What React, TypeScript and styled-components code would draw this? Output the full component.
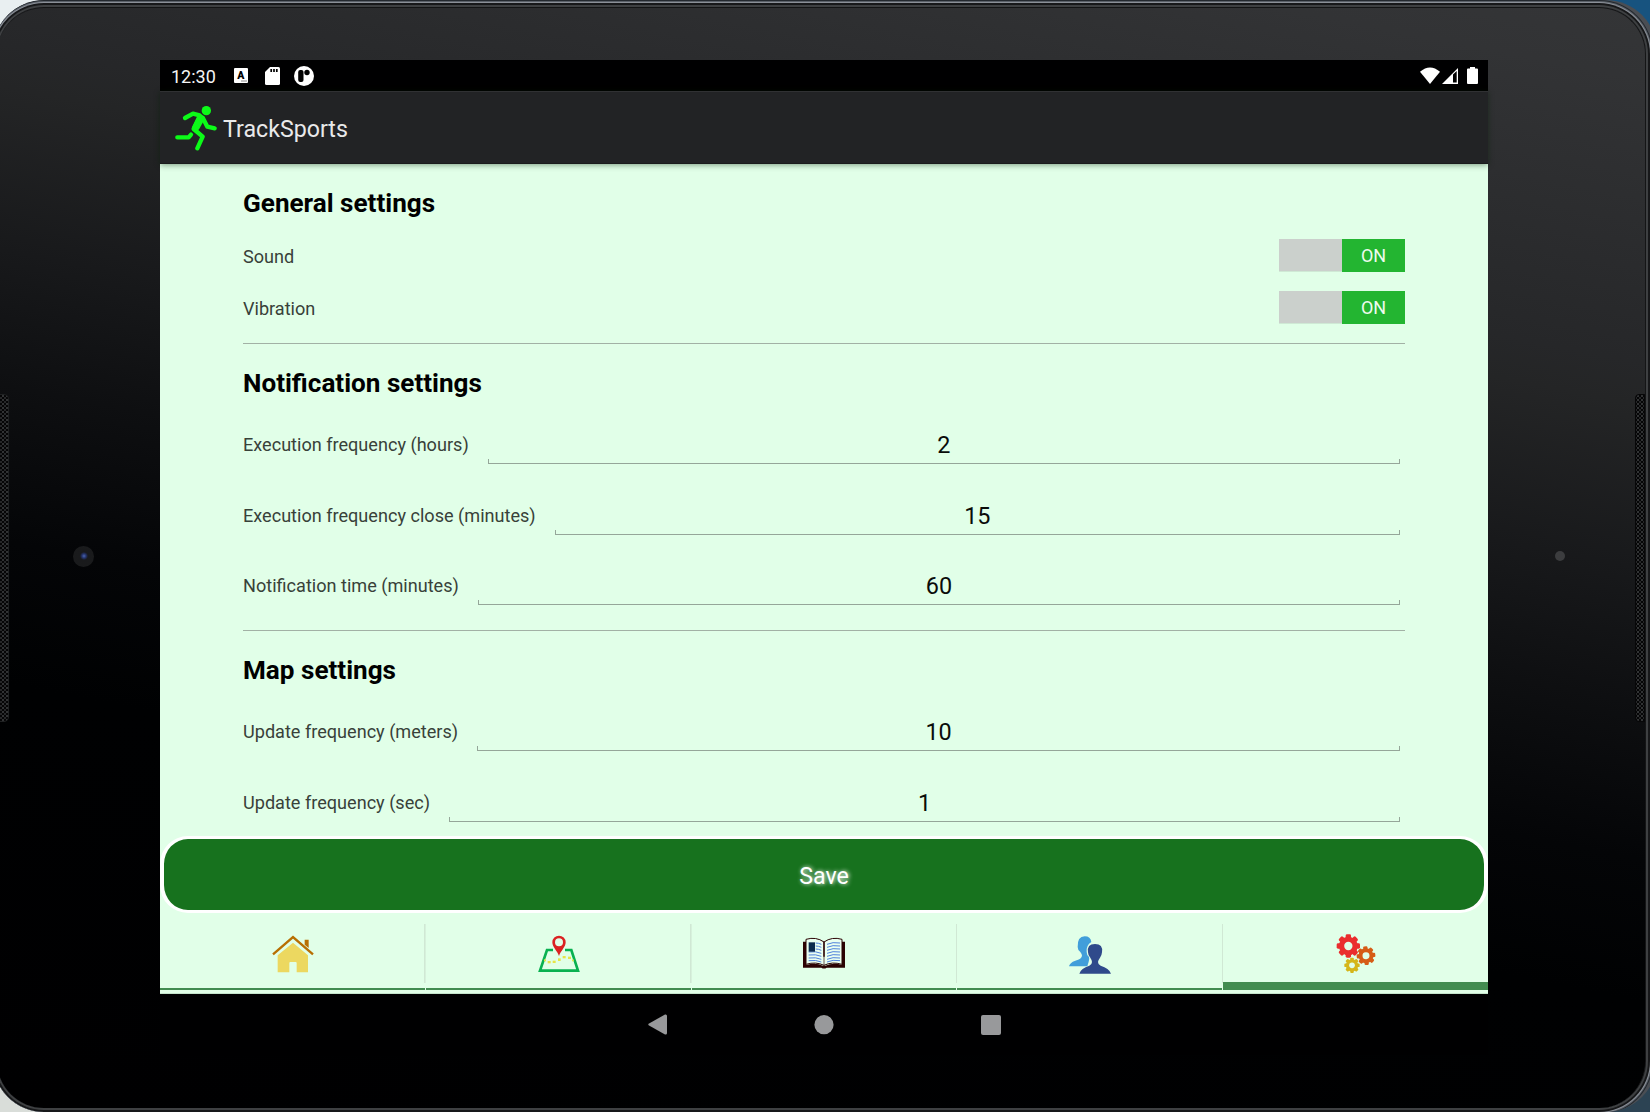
import React from "react";
import styled, { createGlobalStyle } from "styled-components";

const GlobalStyle = createGlobalStyle`
  *, *::before, *::after { box-sizing: border-box; }
  html, body { margin: 0; padding: 0; overflow: hidden; }
  body { font-family: Roboto, "Liberation Sans", sans-serif; }
`;

const Desk = styled.div`
  width: 1650px;
  height: 1112px;
  overflow: hidden;
  background:
    linear-gradient(#e9eff1, #e9eff1) 0 0 / 50% 50% no-repeat,
    linear-gradient(#17537f, #17537f) 100% 0 / 50% 50% no-repeat,
    linear-gradient(#d9ddd9, #d9ddd9) 0 100% / 50% 50% no-repeat,
    linear-gradient(#2c4353, #2c4353) 100% 100% / 50% 50% no-repeat;
`;

const Casing = styled.div`
  width: 1664px;
  height: 1112px;
  margin-left: -7px;
  padding: 7px 11px 4px 4px;
  border-radius: 51px;
  background: #4a4e54;
  overflow: hidden;
`;

const Face = styled.div`
  position: relative;
  height: 1101px;
  padding: 52px 0 0 163px;
  border-radius: 47px;
  border: solid #141516;
  border-width: 1px 1px 0 0;
  box-shadow: 0 0 0 2px #3e4042, 0 0 0 4px #17181a, 0 0 0 5px #8b9098, 0 0 0 6px #5a6068, 0 0 0 7px #23282e;
  background: linear-gradient(
    191deg,
    #343537 0%,
    #323335 5%,
    #262729 25%,
    #242526 28%,
    #18191b 39.5%,
    #0e0f11 49%,
    #040507 60%,
    #000102 70%,
    #000001 100%
  );
`;

const Speaker = styled.div<{ $side: "left" | "right" }>`
  position: absolute;
  top: 386px;
  ${(p) => (p.$side === "left" ? "left: -1px;" : "right: 0;")}
  width: ${(p) => (p.$side === "left" ? 13 : 10)}px;
  height: 328px;
  border: 1px solid ${(p) => (p.$side === "left" ? "#1f2122" : "#070708")};
  border-radius: ${(p) => (p.$side === "left" ? "0 5px 5px 0" : "4px 0 0 4px")};
  background:
    radial-gradient(circle at 1px 1px, #3e4042 0.6px, transparent 1.1px) 1px 0 / 4px 4px,
    radial-gradient(circle at 1px 1px, #303133 0.6px, transparent 1.1px) 3px 2px / 4px 4px,
    #050506;
`;

const Camera = styled.div`
  position: absolute;
  left: 76px;
  top: 538px;
  width: 21px;
  height: 21px;
  border-radius: 50%;
  background: radial-gradient(circle at 11px 10px, #4d66ac 0, #25356f 2px, #191a1c 4px, #1a1b1c 100%);
`;

const Sensor = styled.div`
  position: absolute;
  left: 1558px;
  top: 543px;
  width: 10px;
  height: 10px;
  border-radius: 50%;
  background: #3c3d3f;
`;

const Screen = styled.div`
  width: 1328px;
  height: 995px;
  display: flex;
  flex-direction: column;
  background: #e1ffe8;
`;

const StatusBar = styled.div`
  flex: none;
  height: 31px;
  padding: 0 10px 0 11px;
  display: flex;
  align-items: center;
  justify-content: space-between;
  background: #000001;
`;

const StatusGroup = styled.div`
  display: flex;
  align-items: center;
`;

const Clock = styled.span`
  width: 63px;
  color: #f4f4f4;
  font-size: 18px;
  line-height: 31px;
  padding-top: 2px;
`;

const AppBar = styled.header`
  position: relative;
  flex: none;
  height: 73px;
  padding-left: 15px;
  display: flex;
  align-items: center;
  background: #222325;
  border-top: 1px solid #303133;
  border-bottom: 1px solid #1a1b1c;
  box-shadow: 0 1px 6px rgba(0, 30, 0, 0.45);
`;

const AppTitle = styled.h1`
  margin: 3px 0 0 5px;
  color: #e9e9ea;
  font-size: 23.2px;
  font-weight: 400;
  line-height: 30px;
`;

const Settings = styled.main`
  flex: none;
  height: 672px;
  padding: 0 83px;
`;

const Section = styled.section`
  & + & {
    border-top: 1px solid #a2b1a5;
  }
`;

const SectionTitle = styled.h2`
  margin: 0;
  padding-top: 14px;
  height: 65px;
  color: #000;
  font-size: 26.1px;
  font-weight: 700;
  line-height: 50px;
`;

const ToggleRow = styled.div`
  height: 52px;
  display: flex;
  align-items: center;
  justify-content: space-between;
`;

const ToggleGroup = styled.div`
  padding-bottom: 10px;
`;

const Label = styled.span`
  flex: none;
  color: #384139;
  font-size: 18.1px;
  line-height: 24px;
`;

const ToggleLabel = styled(Label)`
  padding-top: 3px;
`;

const Switch = styled.button`
  width: 126px;
  height: 32px;
  padding: 0;
  border: 0;
  display: grid;
  grid-template-columns: 1fr 1fr;
  background: #cbd0cc;
  font-family: inherit;
  box-shadow: 0 1px 0 #cfe9d5;
`;

const SwitchThumb = styled.span`
  grid-column: 2;
  padding-top: 1px;
  background: #23b531;
  color: #eefbef;
  font-size: 18px;
  line-height: 32px;
  text-align: center;
`;

const FieldGroup = styled.div`
  padding-bottom: 9px;
`;

const FieldRow = styled.div`
  height: 70.7px;
  padding-right: 5px;
  display: flex;
  gap: 19px;
`;

const FieldLabel = styled(Label)`
  line-height: 72px;
`;

const Field = styled.div`
  flex: 1;
  height: 55px;
  padding-top: 19px;
  color: #0a0c0a;
  font-size: 23.4px;
  line-height: 34px;
  text-align: center;
  background:
    linear-gradient(#95a699, #95a699) 0 100% / 100% 1px no-repeat,
    linear-gradient(#95a699, #95a699) 0 100% / 1px 5px no-repeat,
    linear-gradient(#95a699, #95a699) 100% 100% / 1px 5px no-repeat;
`;

const SaveButton = styled.button`
  flex: none;
  width: 100%;
  height: 77px;
  padding: 2px 0 0;
  border: solid #fff;
  border-width: 3.5px 4px;
  border-radius: 28px;
  background: #17721e;
  color: #fff;
  font-family: inherit;
  font-size: 23.2px;
  text-shadow: 1px 0 4px #fff;
`;

const Tabs = styled.nav`
  flex: none;
  height: 81px;
  padding: 11px 0 3px;
  display: grid;
  grid-template-columns: repeat(4, 265.8px) 1fr;
  border-bottom: 1px solid #c4e4cb;
`;

const Tab = styled.div<{ $active?: boolean }>`
  display: flex;
  justify-content: center;
  padding-top: 10px;
  background:
    linear-gradient(#d0e8d4, #d0e8d4) 100% 0 / ${(p) => (p.$active ? 0 : 1.6)}px 59px no-repeat,
    linear-gradient(#428c50, #428c50) 0 100% / ${(p) => (p.$active ? "100% 8px" : "calc(100% - 1px) 2px")} no-repeat;
`;

const NavBar = styled.nav`
  flex: 1;
  display: flex;
  justify-content: center;
  align-items: flex-start;
  gap: 146.5px;
  padding-top: 20px;
  background: #000001;
`;

const Icon = styled.svg<{ $l?: number; $t?: number }>`
  flex: none;
  display: block;
  margin-left: ${(p) => p.$l ?? 0}px;
  margin-top: ${(p) => p.$t ?? 0}px;
`;

const Runner = () => (
  <Icon width="43" height="46" viewBox="76 163 129 138" fill="none" stroke="#0cfb18" strokeWidth="13" strokeLinecap="round" strokeLinejoin="round">
    <circle cx="170" cy="180" r="14" fill="#0cfb18" stroke="none" />
    <path d="M106 202 L130 189 L150 194" />
    <path d="M160 203 L173 228 L195 233" />
    <path d="M148 200 L132 235 L159 258 L143 293" />
    <path d="M154 203 L139 230" strokeWidth="22" />
    <path d="M83 260 L117 260 L124 252" />
  </Icon>
);

const House = () => (
  <Icon $t={0.5} width="42" height="38" viewBox="154 13 126 114">
    <path d="M252 27H264V52L252 42Z" fill="#b86f02" />
    <path d="M157 71L217 19L277 71" fill="none" stroke="#b86f02" strokeWidth="7" />
    <path d="M171 74L217 36L262 74V125H228V97Q228 94 225 94H209Q206 94 206 97V125H171Z" fill="#ecd860" />
  </Icon>
);

const MapPin = () => (
  <Icon $t={0.7} width="42" height="38" viewBox="951 14 126 114">
    <path d="M996 59H978L957 121H1071L1051 59H1032" fill="none" stroke="#08b150" strokeWidth="8" />
    <path fillRule="evenodd" d="M1014 77C1009 62 994 50 994 36A20 20 0 0 1 1034 36C1034 50 1019 62 1014 77ZM1014 24A12 12 0 1 0 1014 48A12 12 0 1 0 1014 24Z" fill="#db2222" />
    <g fill="#e6e546">
      <rect x="969" y="87" width="6" height="6" />
      <rect x="980" y="92" width="9" height="7" />
      <rect x="995" y="91" width="9" height="7" />
      <rect x="1011" y="84" width="8" height="8" />
      <rect x="1025" y="77" width="9" height="7" />
      <rect x="1041" y="79" width="9" height="7" />
      <rect x="1053" y="87" width="5" height="6" />
    </g>
  </Icon>
);

const textRows = [70, 79, 88, 97, 106, 115, 123];

const Book = () => (
  <Icon $t={3} width="42" height="32" viewBox="69 52 126 96">
    <path d="M69 66H78V136Q110 128 128 138H136Q160 128 186 136V66H195V144H140Q132 149 124 144H69Z" fill="#2b0303" />
    <path d="M78 59Q108 50 132 67Q156 50 186 59V134Q156 125 132 137Q108 125 78 134Z" fill="#eafff0" stroke="#2b0303" strokeWidth="3" />
    <path d="M132 66V111" stroke="#2b0303" strokeWidth="5" />
    <path d="M132 110V138" stroke="#2b0303" strokeWidth="2" />
    <g fill="none" stroke="#4f82dc" strokeWidth="3">
      {textRows.map((y, i) => (
        <React.Fragment key={y}>
          <path d={i < 3 ? `M107 ${y}Q116 ${y} 124 ${y + 4}` : `M86 ${y}Q108 ${y - 3} 124 ${y + 4}`} />
          <path d={`M141 ${y + 4}Q158 ${y - 4} 180 ${y}`} />
        </React.Fragment>
      ))}
    </g>
    <rect x="86" y="68" width="19" height="28" fill="#0b2b4d" />
  </Icon>
);

const People = () => (
  <Icon $t={2.3} width="42" height="38" viewBox="867 49 126 114">
    <path d="M867 140Q869 129 886 123Q905 118 906 108Q906 103 901 97Q893 91 893 82Q892 50 914 50Q932 50 934 67Q918 77 920 97Q920 107 927 112Q929 119 926 126L922 140Z" fill="#419eda" />
    <path d="M898 162Q903 145 928 138Q936 135 936 127Q936 122 930 113Q925 109 924 98Q920 73 945 73Q970 73 966 98Q965 109 960 114Q954 122 954 127Q954 135 962 138Q987 145 993 162Z" fill="#2f4a8b" />
  </Icon>
);

const Gear = ({ cx, cy, r, hole, color, turn = 0 }: { cx: number; cy: number; r: number; hole: number; color: string; turn?: number }) => (
  <g transform={`translate(${cx} ${cy}) rotate(${turn})`}>
    {[0, 45, 90, 135].map((a) => (
      <rect key={a} x={-r * 0.23} y={-r} width={r * 0.46} height={r * 2} rx={r * 0.12} transform={`rotate(${a})`} fill={color} />
    ))}
    <circle r={r * 0.8} fill={color} />
    <circle r={hole} fill="#e1ffe8" />
  </g>
);

const Gears = () => (
  <Icon width="40" height="40" viewBox="407 341 120 120">
    <Gear cx={444} cy={377} r={35} hole={12.5} color="#ea2d2e" />
    <Gear cx={497} cy={406} r={28} hole={10.5} color="#d65c16" turn={-5} />
    <Gear cx={455} cy={435} r={23} hole={8.5} color="#d5b61a" />
  </Icon>
);

const NotificationIcons = () => (
  <StatusGroup>
    <Icon width="14" height="15" viewBox="0 0 14 15">
      <rect width="14" height="15" rx="1" fill="#fff" />
      <text x="6.8" y="10.8" textAnchor="middle" fontSize="10.5" fontWeight="900" fill="#000">A</text>
      <path d="M7 13H13" stroke="#888" strokeWidth="1" />
    </Icon>
    <Icon $l={17} width="15" height="18" viewBox="0 0 15 18">
      <path d="M5 0H13.5Q15 0 15 1.5V16.5Q15 18 13.5 18H1.5Q0 18 0 16.5V5Z" fill="#fff" />
      <path d="M6.2 2V5M9 2V5M11.8 2V5" stroke="#000" strokeWidth="1.7" />
    </Icon>
    <Icon $l={14} width="20" height="20" viewBox="0 0 20 20">
      <circle cx="10" cy="10" r="10" fill="#fff" />
      <rect x="4.2" y="4" width="5.3" height="12" rx="2" fill="#000" />
      <circle cx="13" cy="6.5" r="2.7" fill="#000" />
    </Icon>
  </StatusGroup>
);

const SystemIcons = () => (
  <StatusGroup>
    <Icon width="20" height="17" viewBox="0 0 20 17">
      <path d="M0 4.8Q10 -3.8 20 4.8L10 17Z" fill="#fff" />
    </Icon>
    <Icon $l={2} $t={1} width="16" height="16" viewBox="0 0 16 16">
      <path d="M0 16L16 0V16Z" fill="#fff" />
      <path d="M11 6.5L14.7 3V14.6H11Z" fill="#000" />
    </Icon>
    <Icon $l={9} width="11" height="17" viewBox="0 0 11 17">
      <path d="M3 0H8V1.5H10Q11 1.5 11 2.5V16Q11 17 10 17H1Q0 17 0 16V2.5Q0 1.5 1 1.5H3Z" fill="#fff" />
    </Icon>
  </StatusGroup>
);

const toggles = ["Sound", "Vibration"];

const fieldSections = [
  {
    title: "Notification settings",
    fields: [
      ["Execution frequency (hours)", "2"],
      ["Execution frequency close (minutes)", "15"],
      ["Notification time (minutes)", "60"],
    ],
  },
  {
    title: "Map settings",
    fields: [
      ["Update frequency (meters)", "10"],
      ["Update frequency (sec)", "1"],
    ],
  },
];

export default function App() {
  return (
    <>
      <GlobalStyle />
      <Desk>
        <Casing>
          <Face>
            <Speaker $side="left" />
            <Speaker $side="right" />
            <Camera />
            <Sensor />
            <Screen>
              <StatusBar>
                <StatusGroup>
                  <Clock>12:30</Clock>
                  <NotificationIcons />
                </StatusGroup>
                <SystemIcons />
              </StatusBar>
              <AppBar>
                <Runner />
                <AppTitle>TrackSports</AppTitle>
              </AppBar>
              <Settings>
                <Section>
                  <SectionTitle>General settings</SectionTitle>
                  <ToggleGroup>
                    {toggles.map((name) => (
                      <ToggleRow key={name}>
                        <ToggleLabel>{name}</ToggleLabel>
                        <Switch>
                          <SwitchThumb>ON</SwitchThumb>
                        </Switch>
                      </ToggleRow>
                    ))}
                  </ToggleGroup>
                </Section>
                {fieldSections.map((section) => (
                  <Section key={section.title}>
                    <SectionTitle>{section.title}</SectionTitle>
                    <FieldGroup>
                      {section.fields.map(([label, value]) => (
                        <FieldRow key={label}>
                          <FieldLabel>{label}</FieldLabel>
                          <Field>{value}</Field>
                        </FieldRow>
                      ))}
                    </FieldGroup>
                  </Section>
                ))}
              </Settings>
              <SaveButton>Save</SaveButton>
              <Tabs>
                <Tab><House /></Tab>
                <Tab><MapPin /></Tab>
                <Tab><Book /></Tab>
                <Tab><People /></Tab>
                <Tab $active><Gears /></Tab>
              </Tabs>
              <NavBar>
                <Icon width="20" height="21" viewBox="0 0 20 21">
                  <path d="M0.6 9.8L17 0.5Q19 0 19 2V19Q19 21 17 20.5L0.6 11.2Q0 10.5 0.6 9.8Z" fill="#98999b" />
                </Icon>
                <Icon width="20" height="21" viewBox="0 0 20 21">
                  <circle cx="10" cy="10.7" r="9.6" fill="#98999b" />
                </Icon>
                <Icon width="20" height="21" viewBox="0 0 20 21">
                  <rect y="1" width="20" height="20" rx="2" fill="#98999b" />
                </Icon>
              </NavBar>
            </Screen>
          </Face>
        </Casing>
      </Desk>
    </>
  );
}
